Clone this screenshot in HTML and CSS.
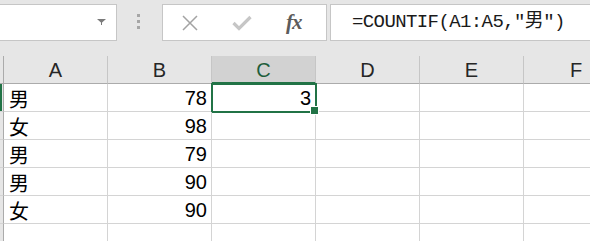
FILE: index.html
```html
<!DOCTYPE html>
<html lang="zh-CN">
<head>
  <meta charset="UTF-8">
  <meta name="viewport" content="width=device-width, initial-scale=1.0">
  <title>COUNTIF</title>
  <link rel="stylesheet" href="styles.css">
</head>
<body>
  <header class="toolbar">
    <div class="namebox">
      <svg class="drop" width="9" height="6" viewBox="0 0 9 6">
        <polygon points="0,0 9,0 4.5,4" fill="#7a7a7a"/>
        <rect x="4" y="3" width="1" height="3" fill="#7a7a7a"/>
      </svg>
    </div>
    <div class="grip"><i></i><i></i><i></i></div>
    <div class="buttons">
      <svg class="cancel" width="16" height="16" viewBox="0 0 16 16">
        <path d="M1 1 L15 15 M15 1 L1 15" stroke="#a3a3a3" stroke-width="1.5" fill="none"/>
      </svg>
      <svg class="enter" width="20" height="16" viewBox="0 0 20 16">
        <path d="M1.5 8 L7 13.5 L18.5 2" stroke="#c6c6c6" stroke-width="3.2" fill="none"/>
      </svg>
      <span class="fx">fx</span>
    </div>
    <div class="formula">=COUNTIF(A1:A5,"男")</div>
  </header>

  <main class="sheet">
    <div class="corner"></div>
    <div class="col">A</div>
    <div class="col">B</div>
    <div class="col active">C</div>
    <div class="col">D</div>
    <div class="col">E</div>
    <div class="col">F</div>

    <div class="row-head active"></div>
    <div class="cell">男</div>
    <div class="cell num">78</div>
    <div class="cell num selected">3</div>
    <div class="cell"></div>
    <div class="cell"></div>
    <div class="cell"></div>

    <div class="row-head"></div>
    <div class="cell">女</div>
    <div class="cell num">98</div>
    <div class="cell"></div>
    <div class="cell"></div>
    <div class="cell"></div>
    <div class="cell"></div>

    <div class="row-head"></div>
    <div class="cell">男</div>
    <div class="cell num">79</div>
    <div class="cell"></div>
    <div class="cell"></div>
    <div class="cell"></div>
    <div class="cell"></div>

    <div class="row-head"></div>
    <div class="cell">男</div>
    <div class="cell num">90</div>
    <div class="cell"></div>
    <div class="cell"></div>
    <div class="cell"></div>
    <div class="cell"></div>

    <div class="row-head"></div>
    <div class="cell">女</div>
    <div class="cell num">90</div>
    <div class="cell"></div>
    <div class="cell"></div>
    <div class="cell"></div>
    <div class="cell"></div>

    <div class="row-head"></div>
    <div class="cell"></div>
    <div class="cell"></div>
    <div class="cell"></div>
    <div class="cell"></div>
    <div class="cell"></div>
    <div class="cell"></div>
  </main>
</body>
</html>
```

FILE: styles.css
```css
:root {
  --chrome: #e6e6e6;
  --box-line: #c6c6c6;
  --grid: #d4d4d4;
  --head-line: #ababab;
  --green: #217346;
  --text: #000;
}

* {
  box-sizing: border-box;
}

body {
  margin: 0;
  width: 590px;
  height: 241px;
  overflow: hidden;
  background-color: #fff;
  font-family: "Liberation Sans", "Noto Sans CJK SC", sans-serif;
  color: var(--text);
}

/* formula bar */

.toolbar {
  display: flex;
  align-items: flex-start;
  height: 56px;
  padding-top: 4px;
  background-color: var(--chrome);
  overflow: hidden;
}

.namebox {
  display: flex;
  align-items: center;
  justify-content: flex-end;
  width: 117px;
  height: 37px;
  padding-right: 10px;
  background-color: #fff;
  border: 1px solid var(--box-line);
  border-left: none;
}

.drop {
  margin-top: -2px;
}

.grip {
  display: flex;
  flex-direction: column;
  gap: 3px;
  margin: 10px 0 0 20px;
}

.grip i {
  width: 3px;
  height: 3px;
  background-color: #a6a6a6;
}

.buttons {
  display: flex;
  align-items: center;
  width: 165px;
  height: 37px;
  margin-left: 22px;
  padding-left: 19px;
  background-color: #fff;
  border: 1px solid var(--box-line);
}

.enter {
  margin-left: 34px;
}

.fx {
  margin-left: 34px;
  font-family: "Liberation Serif", serif;
  font-style: italic;
  font-weight: bold;
  font-size: 21px;
  color: #5c5c5c;
  letter-spacing: -1px;
}

.formula {
  flex: 1;
  height: 37px;
  margin-left: 3px;
  padding-left: 21px;
  line-height: 34px;
  background-color: #fff;
  border: 1px solid var(--box-line);
  border-right: none;
  font-family: "Liberation Mono", "Noto Sans CJK SC", monospace;
  font-size: 19px;
  letter-spacing: -0.6px;
  color: #1a1a1a;
}

/* grid */

.sheet {
  display: grid;
  grid-template-columns: 4px repeat(5, 104px) 66px;
  grid-auto-rows: 28px;
  overflow: hidden;
}

.corner,
.row-head {
  background-color: var(--chrome);
  border-right: 1px solid var(--head-line);
  border-bottom: 1px solid var(--grid);
}

.corner {
  border-bottom-color: var(--head-line);
}

.row-head.active {
  box-shadow: inset 2px 0 var(--green);
}

.col {
  display: flex;
  align-items: center;
  justify-content: center;
  padding-top: 2px;
  background-color: var(--chrome);
  border-right: 1px solid var(--box-line);
  border-bottom: 1px solid var(--head-line);
  font-size: 20px;
  color: #262626;
}

/* F is cut by the window edge, so keep its letter where a full column puts it */
.col:nth-child(7) {
  justify-content: flex-start;
  padding-left: 46px;
  border-right: none;
}

.col.active {
  background-color: #d2d2d2;
  border-bottom: 2px solid var(--green);
  color: #1e5e3c;
}

.cell {
  position: relative;
  display: flex;
  align-items: center;
  padding: 2px 4px 0 5px;
  border-right: 1px solid var(--grid);
  border-bottom: 1px solid var(--grid);
  font-size: 20px;
}

.cell:nth-child(7n) {
  border-right: none;
}

.cell.num {
  justify-content: flex-end;
}

.cell.selected::after {
  content: "";
  position: absolute;
  top: -1px;
  left: -1px;
  right: -2px;
  bottom: -2px;
  border: 2px solid var(--green);
}

.cell.selected::before {
  content: "";
  position: absolute;
  right: -4px;
  bottom: -4px;
  width: 7px;
  height: 7px;
  background-color: var(--green);
  border: 1px solid #fff;
  z-index: 1;
}
```
